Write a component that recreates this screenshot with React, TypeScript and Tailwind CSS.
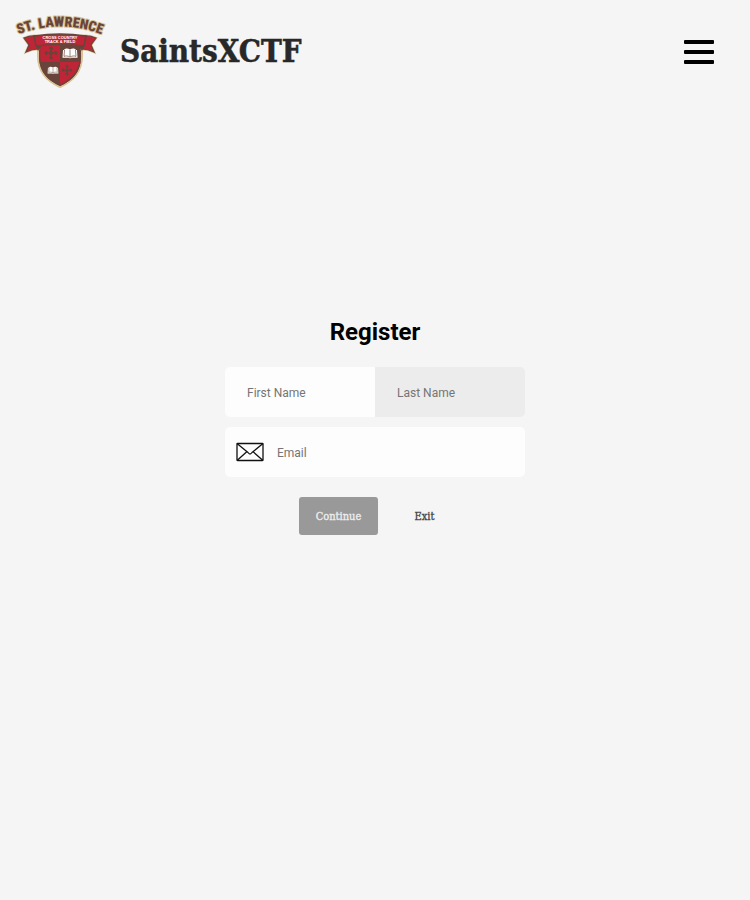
import { useState } from "react";

const slab = "font-['Roboto_Slab','DejaVu_Serif_Condensed','DejaVu_Serif',serif]";

function Cross({ x, y, size, color }: { x: number; y: number; size: number; color: string }) {
  return (
    <g transform={`translate(${x} ${y}) scale(${size})`} stroke={color} fill={color}>
      <path d="M-6 0H6M0-6V6" strokeWidth="1.8" />
      <path d="M-5-2V2M5-2V2M-2-5H2M-2 5H2" strokeWidth="1.6" />
      <circle r="2" stroke="none" />
      <path d="M-7 0l2-1.5v3zM7 0l-2-1.5v3zM0-7l1.5 2h-3zM0 7l1.5-2h-3z" stroke="none" />
    </g>
  );
}

function Book({ x, y, size }: { x: number; y: number; size: number }) {
  return (
    <g transform={`translate(${x} ${y}) scale(${size})`}>
      <path d="M-7-3H-6C-5-5-2-5 0-3.500C2-5 5-5 6-3H7L7.500 4.800H1L0 5.500L-1 4.800H-7.500Z" fill="#fff" />
      <path d="M0-3V4M-5.500-3L-6 3.400C-4 2.600-2 2.800 0 4.200C2 2.800 4 2.600 6 3.400L5.500-3" fill="none" stroke="#754b3e" strokeWidth=".7" />
    </g>
  );
}

function Logo() {
  return (
    <svg viewBox="0 0 100 84" className="h-[84px] w-[100px] shrink-0" role="img" aria-label="St. Lawrence Cross Country Track &amp; Field">
      <defs>
        <path id="logo-arc" d="M2 29Q50 8 98 29" />
        <clipPath id="shield-clip">
          <path d="M29 35H71V48C71 65 61 73 50 78C39 73 29 65 29 48Z" />
        </clipPath>
      </defs>
      <path d="M28 36H72V48C72 66 61 74 50 79C39 74 28 66 28 48Z" fill="#68443a" stroke="#d9c296" strokeWidth="2" />
      <g clipPath="url(#shield-clip)">
        <path d="M30 34H50V54H30ZM50 54H72V79H50Z" fill="#bf2536" />
        <path d="M29 35V48C29 65 39 73 50 78C61 73 71 65 71 48V35" fill="none" stroke="#68443a" strokeWidth="2.500" />
      </g>
      <Cross x={41} y={45} size={0.95} color="#68443a" />
      <Cross x={57} y={62} size={0.78} color="#68443a" />
      <Book x={60} y={45} size={1} />
      <Book x={43} y={62} size={0.72} />
      <path d="M14 30Q21 27 28 28V41Q22 41 16 44L19 37ZM86 30Q79 27 72 28V41Q78 41 84 44L81 37Z" fill="#bf2536" stroke="#d9c296" strokeWidth="2.400" />
      <path d="M14 30Q21 27 28 28V41Q22 41 16 44L19 37ZM86 30Q79 27 72 28V41Q78 41 84 44L81 37Z" fill="#bf2536" stroke="#68443a" strokeWidth="1.200" />
      <path d="M24 28Q50 24 76 28L74 38Q50 35 26 38Z" fill="#bf2536" stroke="#68443a" strokeWidth="1.500" />
      <path d="M26 38L28 43L32 37ZM74 38L72 43L68 37Z" fill="#68443a" />
      <g className="font-['Liberation_Sans',sans-serif]" fontWeight="700" fontSize="4" fill="#fff" textAnchor="middle">
        <text x="50" y="30.500">CROSS COUNTRY</text>
        <text x="50" y="35.200">TRACK &amp; FIELD</text>
      </g>
      <text
        className="font-['Liberation_Sans_Narrow','Roboto_Condensed','Roboto',sans-serif]"
        fontWeight="900"
        fontSize="14"
        textAnchor="middle"
        strokeLinejoin="round"
        fill="#68443a"
        stroke="#d9c296"
        strokeWidth="2"
        paintOrder="stroke"
      >
        <textPath href="#logo-arc" startOffset="50%">ST. LAWRENCE</textPath>
      </text>
    </svg>
  );
}

function Envelope() {
  return (
    <svg viewBox="0 0 28 20" className="h-5 w-7 shrink-0" fill="none" stroke="#111" strokeWidth="1.300" strokeLinejoin="round" aria-hidden="true">
      <rect x="1" y="1.500" width="26" height="17" rx=".5" />
      <path d="M1 1.500L12 10.500Q14 13.500 16 10.500L27 1.500M1 18.500L10.800 9.800M27 18.500L17.200 9.800" />
    </svg>
  );
}

const field =
  "h-[50px] w-full min-w-0 pt-[2px] font-['Roboto',sans-serif] text-xs text-[#333] outline-none placeholder:text-[#757575] placeholder:opacity-100";

const action = `${slab} h-[38px] rounded-[3px] pt-[3px] text-[11px] font-medium [-webkit-text-stroke:0.3px]`;

export default function App() {
  const [first, setFirst] = useState("");
  const [last, setLast] = useState("");
  const [email, setEmail] = useState("");
  return (
    <div className="flex min-h-screen flex-col bg-[#f5f5f5] font-['Roboto',sans-serif]">
      <header className="flex h-[100px] items-center justify-between pr-9 pl-[10px]">
        <a href="#home" className="flex items-center gap-[10px]">
          <Logo />
          <span className={`${slab} pt-[2px] text-[31px] leading-10 font-bold text-[#282828] [-webkit-text-stroke:0.5px]`}>SaintsXCTF</span>
        </a>
        <button type="button" aria-label="Menu" className="mt-1 flex w-[30px] flex-col gap-[6px]">
          <span className="h-1 w-full rounded-[1px] bg-black" />
          <span className="h-1 w-full rounded-[1px] bg-black" />
          <span className="h-1 w-full rounded-[1px] bg-black" />
        </button>
      </header>
      <main className="flex flex-1 flex-col items-center pt-[216px]">
        <form className="flex w-full max-w-[300px] flex-col" onSubmit={(e) => e.preventDefault()}>
          <h1 className="text-center text-2xl leading-8 font-bold text-black">Register</h1>
          <div className="mt-[19px] grid grid-cols-2 overflow-hidden rounded-[5px]">
            <input aria-label="First Name" placeholder="First Name" value={first} onChange={(e) => setFirst(e.target.value)} className={`${field} bg-[#fdfdfd] px-[22px]`} />
            <input aria-label="Last Name" placeholder="Last Name" value={last} onChange={(e) => setLast(e.target.value)} className={`${field} bg-[#ececec] px-[22px]`} />
          </div>
          <label className="mt-[10px] flex items-center gap-[13px] rounded-[5px] bg-[#fdfdfd] pr-5 pl-[11px]">
            <Envelope />
            <input type="email" aria-label="Email" placeholder="Email" value={email} onChange={(e) => setEmail(e.target.value)} className={field} />
          </label>
          <div className="mt-5 flex justify-center gap-5">
            <button type="submit" className={`${action} w-[79px] bg-[#999] text-[#eee]`}>Continue</button>
            <button type="button" className={`${action} w-[53px] text-[#444]`}>Exit</button>
          </div>
        </form>
      </main>
    </div>
  );
}
